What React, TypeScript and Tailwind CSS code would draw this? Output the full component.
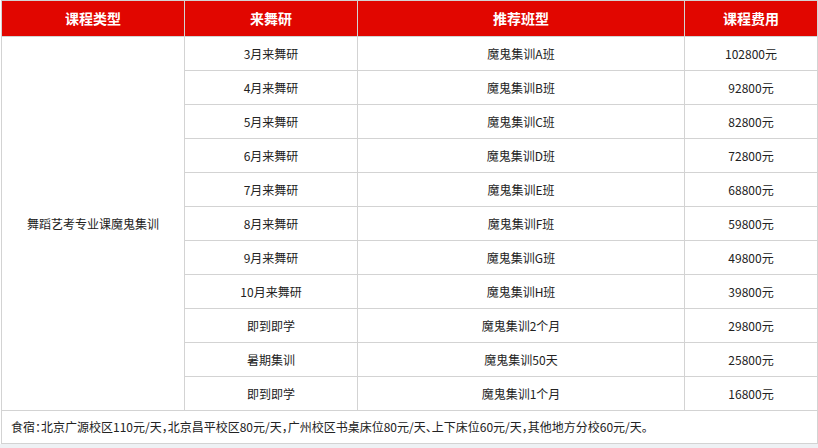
import React from "react";

const rows = [
  { month: "3月来舞研", cls: "魔鬼集训A班", fee: "102800元" },
  { month: "4月来舞研", cls: "魔鬼集训B班", fee: "92800元" },
  { month: "5月来舞研", cls: "魔鬼集训C班", fee: "82800元" },
  { month: "6月来舞研", cls: "魔鬼集训D班", fee: "72800元" },
  { month: "7月来舞研", cls: "魔鬼集训E班", fee: "68800元" },
  { month: "8月来舞研", cls: "魔鬼集训F班", fee: "59800元" },
  { month: "9月来舞研", cls: "魔鬼集训G班", fee: "49800元" },
  { month: "10月来舞研", cls: "魔鬼集训H班", fee: "39800元" },
  { month: "即到即学", cls: "魔鬼集训2个月", fee: "29800元" },
  { month: "暑期集训", cls: "魔鬼集训50天", fee: "25800元" },
  { month: "即到即学", cls: "魔鬼集训1个月", fee: "16800元" },
];

export default function App() {
  const head = "h-[37px] border-t border-r border-b border-[#d3d3d3] bg-[#e10600] flex items-center justify-center text-white font-bold text-[14px]";
  const cell = "h-[34px] border-r border-b border-[#d3d3d3] flex items-center justify-center text-[12px] text-[#222]";

  return (
    <div className="h-screen bg-[#eef1f4] font-['Noto_Sans_CJK_SC','Liberation_Sans',sans-serif]">
      <div className="bg-white pl-px">
        <div className="grid grid-cols-[184px_173px_327px_133px]">
          <div className={head + " border-l"}>课程类型</div>
          <div className={head}>来舞研</div>
          <div className={head}>推荐班型</div>
          <div className={head}>课程费用</div>

          {/* 第一列跨 11 行 */}
          <div className="row-span-11 border-l border-r border-b border-[#d3d3d3] flex items-center justify-center text-[12px] text-[#222]">
            舞蹈艺考专业课魔鬼集训
          </div>
          {rows.map((r, i) => (
            <React.Fragment key={i}>
              <div className={cell}>{r.month}</div>
              <div className={cell}>{r.cls}</div>
              <div className={cell}>{r.fee}</div>
            </React.Fragment>
          ))}

          <div className="col-span-4 h-[33px] border-l border-r border-b border-[#d3d3d3] flex items-center pl-[9px] text-[12px] text-[#222] [font-feature-settings:'halt']">
            食宿：北京广源校区110元/天，北京昌平校区80元/天，广州校区书桌床位80元/天、上下床位60元/天，其他地方分校60元/天。
          </div>
        </div>
      </div>
    </div>
  );
}
